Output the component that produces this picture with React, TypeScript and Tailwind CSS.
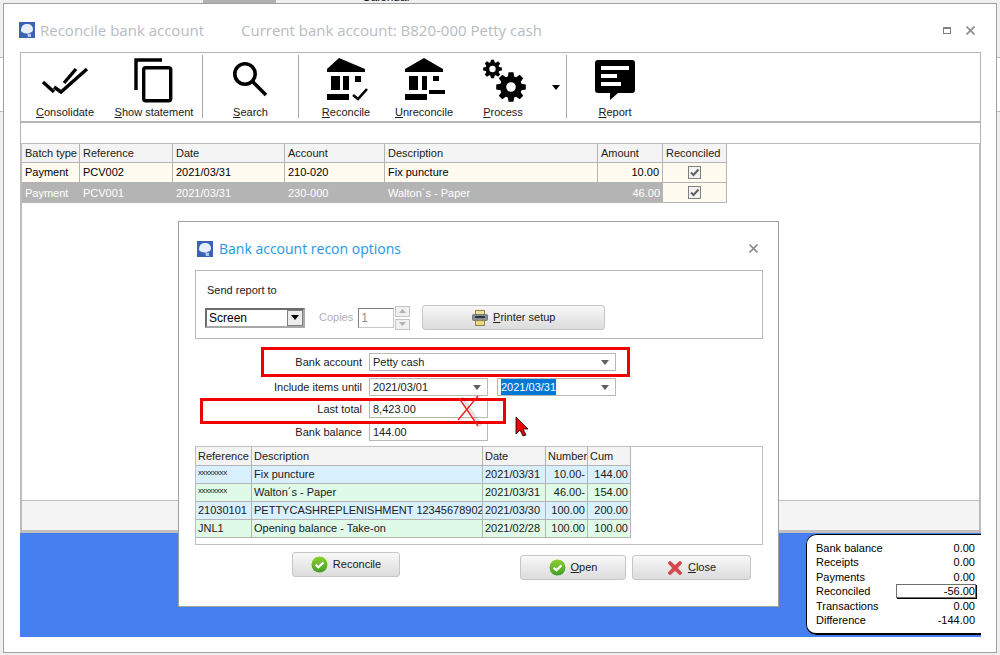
// Reconcile bank account window with the recon options dialog on top

const gear = (cx: number, cy: number, ro: number, ri: number, hole: number) => {
  const pts: string[] = [];
  const teeth = 8;
  for (let i = 0; i < teeth; i++) {
    const a = (i * 2 * Math.PI) / teeth;
    const w = Math.PI / teeth;
    const steps: [number, number][] = [
      [ri, a - w * 0.75],
      [ro, a - w * 0.42],
      [ro, a + w * 0.42],
      [ri, a + w * 0.75],
    ];
    steps.forEach(([r, t]) => pts.push(`${(cx + r * Math.cos(t)).toFixed(2)} ${(cy + r * Math.sin(t)).toFixed(2)}`));
  }
  return `M${pts.join("L")}Z M${cx - hole} ${cy}a${hole} ${hole} 0 1 0 ${hole * 2} 0a${hole} ${hole} 0 1 0 ${-hole * 2} 0Z`;
};

const ConsolidateIcon = () => (
  <svg width="48" height="48" viewBox="41 56 48 48" fill="none" stroke="#000" strokeWidth="3.4">
    <path d="M43 82L54 92" />
    <path d="M54 87L61 92L87 69" />
    <path d="M64 83L76 69" />
  </svg>
);
const CopyIcon = () => (
  <svg width="48" height="48" viewBox="130 56 48 48" fill="none" stroke="#000" strokeWidth="3.4">
    <path d="M162 60H136V90" />
    <rect x="143.7" y="67.7" width="27" height="33" rx="2" />
  </svg>
);
const SearchIcon = () => (
  <svg width="48" height="48" viewBox="227 56 48 48" fill="none" stroke="#000" strokeWidth="3.6">
    <circle cx="245" cy="74" r="10.2" />
    <path d="M253 82L266 95" />
  </svg>
);
const ReconcileIcon = () => (
  <svg width="48" height="48" viewBox="322 56 48 48" fill="#000">
    <path d="M339 58L365 69V72H327V69Z" />
    <path d="M331 76h9v14h-9zM343 76h6v14h-6zM355 76h6v6h-6zM327 94h22v6h-22z" />
    <path d="M353 95L358 99L367 89" fill="none" stroke="#000" strokeWidth="2.6" />
  </svg>
);
const UnreconcileIcon = () => (
  <svg width="48" height="48" viewBox="400 56 48 48" fill="#000">
    <path d="M424 58L443 69V72H405V69Z" />
    <path d="M409 76h9v14h-9zM422 76h5v14h-5zM433 76h6v5h-6zM405 94h22v6h-22zM429 90h16v4h-16z" />
  </svg>
);
const ProcessIcon = () => (
  <svg width="48" height="48" viewBox="479 56 48 48" fill="#000">
    <path fillRule="evenodd" d={gear(492.5, 69, 9.5, 7, 3.2)} />
    <path fillRule="evenodd" d={gear(511, 87, 15, 11, 4.8)} />
  </svg>
);
const ReportIcon = () => (
  <svg width="48" height="48" viewBox="591 56 48 48">
    <path d="M598 60H632Q635 60 635 63V90Q635 93 632 93H618L610 100V93H598Q595 93 595 90V63Q595 60 598 60Z" fill="#000" />
    <path d="M601 66h28v4h-28zM601 74h16v4h-16zM601 82h20v4h-20z" fill="#fff" />
  </svg>
);
const AppIcon = () => (
  <svg width="16" height="16" viewBox="0 0 16 16" className="shrink-0">
    <rect width="16" height="16" fill="#3c62b4" />
    <path d="M2 9C2 3 5 2 8 2s6 1 6 6l-1 2C9 12 4 12 2 9Z" fill="#e8eefa" />
    <path d="M8 11l4 1v3H9Z" fill="#b8c8ea" />
  </svg>
);
const TickIcon = () => (
  <svg width="17" height="17" viewBox="0 0 17 17" className="shrink-0">
    <defs>
      <linearGradient id="tickfill" x1="0" y1="0" x2="0" y2="1">
        <stop offset="0" stopColor="#8ed02e" />
        <stop offset="1" stopColor="#3f9f28" />
      </linearGradient>
    </defs>
    <circle cx="8.5" cy="8.5" r="8" fill="url(#tickfill)" />
    <path d="M4.6 8.6L7.4 11.2L12.4 6.4" fill="none" stroke="#fff" strokeWidth="2.2" />
  </svg>
);
const CrossIcon = () => (
  <svg width="16" height="16" viewBox="0 0 16 16" className="shrink-0">
    <path d="M1 3L3 1L8 5.5L13 1L15 3L10.5 8L15 13L13 15L8 10.5L3 15L1 13L5.5 8Z" fill="#d9474a" stroke="#b93a3e" strokeWidth="0.6" />
  </svg>
);
const PrinterIcon = () => (
  <svg width="16" height="16" viewBox="0 0 16 16" className="shrink-0">
    <rect x="3.5" y="0.5" width="9" height="4" fill="#f0df90" stroke="#8c8450" />
    <rect x="0.5" y="4.5" width="15" height="6" rx="1" fill="#8a9098" stroke="#70767c" />
    <rect x="3" y="6" width="10" height="2" fill="#303438" />
    <rect x="3.5" y="10.5" width="9" height="5" fill="#e8d67e" stroke="#8c8450" />
  </svg>
);
const Caret = ({ color = "#606060" }: { color?: string }) => (
  <svg width="8" height="5" viewBox="0 0 8 5" className="shrink-0">
    <path d="M0 0H8L4 5Z" fill={color} />
  </svg>
);
const CloseMark = () => (
  <svg width="9" height="9" viewBox="0 0 9 9" fill="none" stroke="#8c8c8c" strokeWidth="1.6">
    <path d="M0.5 0.5L8.5 8.5M8.5 0.5L0.5 8.5" />
  </svg>
);

const ToolButton = ({ width, label, rest, icon }: { width: string; label: string; rest: string; icon: React.ReactNode }) => (
  <div className={`${width} flex flex-col items-center pt-[3px]`}>
    {icon}
    <span className="leading-[14px] mt-px">
      <u>{label}</u>
      {rest}
    </span>
  </div>
);
const Sep = () => <div className="w-px h-[63px] mt-[2px] bg-[#a8a8a8] shrink-0" />;

const mainRows = [
  { batch: "Payment", ref: "PCV002", date: "2021/03/31", account: "210-020", desc: "Fix puncture", amount: "10.00" },
  { batch: "Payment", ref: "PCV001", date: "2021/03/31", account: "230-000", desc: "Walton´s - Paper", amount: "46.00" },
];

const subRows = [
  { ref: "xxxxxxxx", desc: "Fix puncture", date: "2021/03/31", num: "10.00-", cum: "144.00", bg: "bg-[#d8f0ff]" },
  { ref: "xxxxxxxx", desc: "Walton´s - Paper", date: "2021/03/31", num: "46.00-", cum: "154.00", bg: "bg-[#dffae6]" },
  { ref: "21030101", desc: "PETTYCASHREPLENISHMENT 12345678902", date: "2021/03/30", num: "100.00", cum: "200.00", bg: "bg-[#d8f0ff]" },
  { ref: "JNL1", desc: "Opening balance - Take-on", date: "2021/02/28", num: "100.00", cum: "100.00", bg: "bg-[#dffae6]" },
];

const status = [
  { label: "Bank balance", value: "0.00" },
  { label: "Receipts", value: "0.00" },
  { label: "Payments", value: "0.00" },
  { label: "Reconciled", value: "-56.00", boxed: true },
  { label: "Transactions", value: "0.00" },
  { label: "Difference", value: "-144.00" },
];

const CheckCell = () => (
  <div className="h-full flex items-center justify-center bg-[#fffbf0] border-r border-b border-[#b4b4b4]">
    <div className="w-[13px] h-[13px] border border-[#808080] bg-[#f2f2f2] flex items-center justify-center">
      <svg width="11" height="11" viewBox="0 0 11 11" fill="none" stroke="#606060" strokeWidth="2">
        <path d="M2 5.5L4.5 8L9.5 2.5" />
      </svg>
    </div>
  </div>
);

const head = "px-[3px] flex items-center bg-[#f4f4f4] border-r border-b border-[#b4b4b4] whitespace-nowrap overflow-hidden";
const formInput = "h-[18px] border border-[#b8b8b8] bg-white flex items-center justify-between pl-[3px] pr-[6px]";

const FormRow = ({ label, className, children }: { label: string; className: string; children: React.ReactNode }) => (
  <div className={`flex items-center gap-[7px] ${className}`}>
    <div className="w-[167px] text-right">{label}</div>
    {children}
  </div>
);

const DialogButton = ({ width, icon, label, rest, className }: { width: string; icon: React.ReactNode; label: string; rest: string; className?: string }) => (
  <div className={`${width} h-[25px] flex items-center justify-center gap-[5px] rounded-[3px] border border-[#c6c6c6] bg-gradient-to-b from-[#f8f8f8] to-[#dcdcdc] ${className ?? ""}`}>
    {icon}
    <span>
      <u>{label}</u>
      {rest}
    </span>
  </div>
);

export default function App() {
  return (
    <div className="relative w-[1000px] h-[655px] overflow-hidden bg-[#f0f0f0] p-[3px] text-[11px] text-[#202020] font-['Liberation_Sans',sans-serif]">
      {/* slivers of the app behind the window */}
      <div className="absolute left-[203px] top-0 w-[73px] h-[3px] bg-[#b0b0b0]" />
      <div className="absolute left-0 top-[57px] w-[3px] h-[55px] bg-white border-y border-[#b8b8b8]" />
      <div className="absolute right-0 top-[57px] w-[3px] h-[55px] bg-white border-y border-[#b8b8b8]" />
      <div className="absolute left-[362px] -top-[10px] leading-[14px] text-[12px]">Calendar</div>

      {/* main window */}
      <div className="relative w-[994px] h-[650px] bg-white border border-[#a0a0a0] pl-[16px] pr-[15px] flex flex-col">
        <div className="h-[48px] flex items-center pt-[4px] font-['Open_Sans',sans-serif] text-[15px] text-[#b8bcc2]">
          <div className="-ml-[1px] mr-[5px]">
            <AppIcon />
          </div>
          <span className="w-[201px]">Reconcile bank account</span>
          <span>Current bank account: B820-000 Petty cash</span>
          <div className="ml-auto flex items-center gap-[15px] pr-[6px]">
            <div className="w-[8px] h-[7px] border border-[#808080] border-t-2" />
            <CloseMark />
          </div>
        </div>

        <div className="h-[71px] flex border-x border-t border-b-2 border-[#b4b4b4]">
          <ToolButton width="w-[88px]" label="C" rest="onsolidate" icon={<ConsolidateIcon />} />
          <ToolButton width="w-[90px]" label="S" rest="how statement" icon={<CopyIcon />} />
          <div className="w-[3px]" />
          <Sep />
          <ToolButton width="w-[95px]" label="S" rest="earch" icon={<SearchIcon />} />
          <Sep />
          <ToolButton width="w-[94px]" label="R" rest="econcile" icon={<ReconcileIcon />} />
          <ToolButton width="w-[62px]" label="U" rest="nreconcile" icon={<UnreconcileIcon />} />
          <ToolButton width="w-[96px]" label="P" rest="rocess" icon={<ProcessIcon />} />
          <div className="w-[15px] pl-[1px] pt-[32px]">
            <Caret color="#000" />
          </div>
          <Sep />
          <ToolButton width="w-[96px]" label="R" rest="eport" icon={<ReportIcon />} />
        </div>

        <div className="h-[20px] border-x border-[#b4b4b4]" />

        <div className="h-[390px] flex flex-col border-x-2 border-t border-[#bcbcbc]">
          <div className="flex-1 bg-white">
            <div className="w-[705px] grid grid-cols-[58px_93px_112px_100px_213px_65px_64px] grid-rows-[19px_20px_20px]">
              {["Batch type", "Reference", "Date", "Account", "Description", "Amount", "Reconciled"].map((h) => (
                <div key={h} className={head}>
                  {h}
                </div>
              ))}
              {mainRows.map((r, i) => {
                const cell =
                  i === 0
                    ? "px-[3px] flex items-center bg-[#fffbf0] border-r border-b border-[#b4b4b4] text-black"
                    : "px-[3px] flex items-center bg-[#b4b4b4] text-white";
                return [
                  <div key={`${r.ref}a`} className={cell}>{r.batch}</div>,
                  <div key={`${r.ref}b`} className={cell}>{r.ref}</div>,
                  <div key={`${r.ref}c`} className={cell}>{r.date}</div>,
                  <div key={`${r.ref}d`} className={cell}>{r.account}</div>,
                  <div key={`${r.ref}e`} className={cell}>{r.desc}</div>,
                  <div key={`${r.ref}f`} className={`${cell} justify-end ${i === 0 ? "text-[#f00000]" : ""}`}>{r.amount}</div>,
                  <CheckCell key={`${r.ref}g`} />,
                ];
              })}
            </div>
          </div>
          <div className="h-[30px] bg-[#f4f4f4] border-t border-[#c0c0c0]" />
          <div className="h-[3px] bg-[#c0c0c0] -mb-[0px]" />
        </div>

        <div className="relative h-[104px] bg-[#4680f0]">
          {/* totals box, cut by the right edge of the window */}
          <div className="absolute right-0 top-[1px] w-[175px] h-[101px] overflow-hidden rounded-l-[10px]">
            <div className="w-[185px] h-[101px] bg-white border border-black border-b-2 rounded-[10px] pl-[9px] pt-[6px] pr-[15px] text-black">
              {status.map((s) => (
                <div key={s.label} className="relative flex justify-between h-[14.4px] leading-[14.4px]">
                  <span>{s.label}</span>
                  <span>{s.value}</span>
                  {s.boxed && (
                    <div className="absolute right-[-1px] top-0 w-[80px] h-[14px] border border-[#707070] shadow-[1px_1px_0_#000]" />
                  )}
                </div>
              ))}
            </div>
          </div>
        </div>
      </div>

      {/* options dialog */}
      <div className="absolute left-[178px] top-[221px] w-[601px] h-[386px] bg-white border border-[#a0a0a0] pl-[16px] pr-[15px] flex flex-col">
        <div className="h-[48px] flex items-center pt-[5px]">
          <div className="ml-[2px] mr-[6px]">
            <AppIcon />
          </div>
          <span className="font-['Open_Sans',sans-serif] text-[14px] text-[#1c98e4]">Bank account recon options</span>
          <div className="ml-auto mr-[5px] flex">
            <CloseMark />
          </div>
        </div>

        <div className="h-[69px] border border-[#b8b8b8] pl-[11px] pt-[12px]">
          <div className="leading-[14px]">Send report to</div>
          <div className="flex items-center mt-[8px] -ml-[2px]">
            <div className="w-[100px] h-[20px] flex items-center justify-between border-2 border-[#6c6c6c] border-r-[#a8a8a8] border-b-[#a8a8a8] pl-[2px] bg-white text-[12px] text-black">
              Screen
              <div className="w-[16px] h-[16px] bg-[#ececec] border border-[#808080] flex items-center justify-center">
                <Caret color="#000" />
              </div>
            </div>
            <span className="ml-[14px] text-[#b0b0b0]">Copies</span>
            <div className="ml-[5px] w-[36px] h-[20px] border border-[#808080] border-r-[#c8c8c8] border-b-[#c8c8c8] pl-[2px] flex items-center text-[12px] text-[#909090]">
              1
            </div>
            <div className="ml-px w-[15px] h-[24px] flex flex-col gap-[2px]">
              <div className="flex-1 bg-[#f0f0f0] border border-[#c4c4c4] flex items-center justify-center">
                <svg width="7" height="4" viewBox="0 0 7 4"><path d="M3.5 0L7 4H0Z" fill="#b0b0b0" /></svg>
              </div>
              <div className="flex-1 bg-[#f0f0f0] border border-[#c4c4c4] flex items-center justify-center">
                <svg width="7" height="4" viewBox="0 0 7 4"><path d="M0 0H7L3.5 4Z" fill="#b0b0b0" /></svg>
              </div>
            </div>
            <DialogButton width="w-[183px]" className="ml-[12px]" icon={<PrinterIcon />} label="P" rest="rinter setup" />
          </div>
        </div>

        <FormRow label="Bank account" className="mt-[14px]">
          <div className={`${formInput} w-[247px]`}>
            Petty cash
            <Caret />
          </div>
        </FormRow>
        <FormRow label="Include items until" className="mt-[7px]">
          <div className={`${formInput} w-[119px]`}>
            2021/03/01
            <Caret />
          </div>
          <div className={`${formInput} w-[119px] ml-[2px]`}>
            <span className="bg-[#0078d7] text-white">2021/03/31</span>
            <Caret />
          </div>
        </FormRow>
        <FormRow label="Last total" className="mt-[4px]">
          <div className={`${formInput} w-[119px]`}>8,423.00</div>
        </FormRow>
        <FormRow label="Bank balance" className="mt-[5px]">
          <div className={`${formInput} w-[119px]`}>144.00</div>
        </FormRow>

        <div className="h-[99px] mt-[5px] border border-[#c0c0c0]">
          <div className="w-[435px] grid grid-cols-[56px_231px_63px_42px_43px] grid-rows-[19px_18px_18px_18px_18px]">
            {["Reference", "Description", "Date", "Number", "Cum"].map((h) => (
              <div key={h} className={`${head} !px-[2px]`}>
                {h}
              </div>
            ))}
            {subRows.map((r) => {
              const cell = `${r.bg} flex items-center px-[2px] border-r border-b border-[#b4b4b4] whitespace-nowrap overflow-hidden`;
              return [
                <div key={`${r.desc}a`} className={`${cell} ${r.ref === "xxxxxxxx" ? "text-[8px] tracking-[-0.4px] pb-[3px]" : ""}`}>{r.ref}</div>,
                <div key={`${r.desc}b`} className={cell}>{r.desc}</div>,
                <div key={`${r.desc}c`} className={cell}>{r.date}</div>,
                <div key={`${r.desc}d`} className={`${cell} justify-end`}>{r.num}</div>,
                <div key={`${r.desc}e`} className={`${cell} justify-end`}>{r.cum}</div>,
              ];
            })}
          </div>
        </div>

        <div className="flex items-start mt-[7px]">
          <DialogButton width="w-[108px]" className="ml-[97px]" icon={<TickIcon />} label="" rest="Reconcile" />
          <DialogButton width="w-[106px]" className="ml-[120px] mt-[3px] border-[#a8a8a8]" icon={<TickIcon />} label="O" rest="pen" />
          <DialogButton width="w-[119px]" className="ml-[6px] mt-[3px]" icon={<CrossIcon />} label="C" rest="lose" />
        </div>

        {/* red highlight boxes drawn over the form */}
        <div className="absolute left-[82px] top-[125px] w-[369px] h-[30px] border-[3px] border-[#f00000]" />
        <div className="absolute left-[21px] top-[176px] w-[306px] h-[26px] border-[3px] border-[#f00000]" />
        <svg className="absolute left-[275px] top-[172px]" width="34" height="40" viewBox="0 0 34 40" fill="none">
          <path d="M8 3L27 32" stroke="#000" strokeOpacity="0.12" strokeWidth="3" />
          <path d="M5 4L24 32" stroke="#f02020" strokeWidth="1.4" />
          <path d="M24 2L4 26" stroke="#f02020" strokeWidth="1.4" />
        </svg>
        <svg className="absolute left-[336px] top-[194px]" width="14" height="21" viewBox="0 0 14 21">
          <path d="M1 1V18L5 14L8 20L11 19L8 13H13Z" fill="#f00000" stroke="#000" strokeWidth="0.8" />
        </svg>
      </div>
    </div>
  );
}
